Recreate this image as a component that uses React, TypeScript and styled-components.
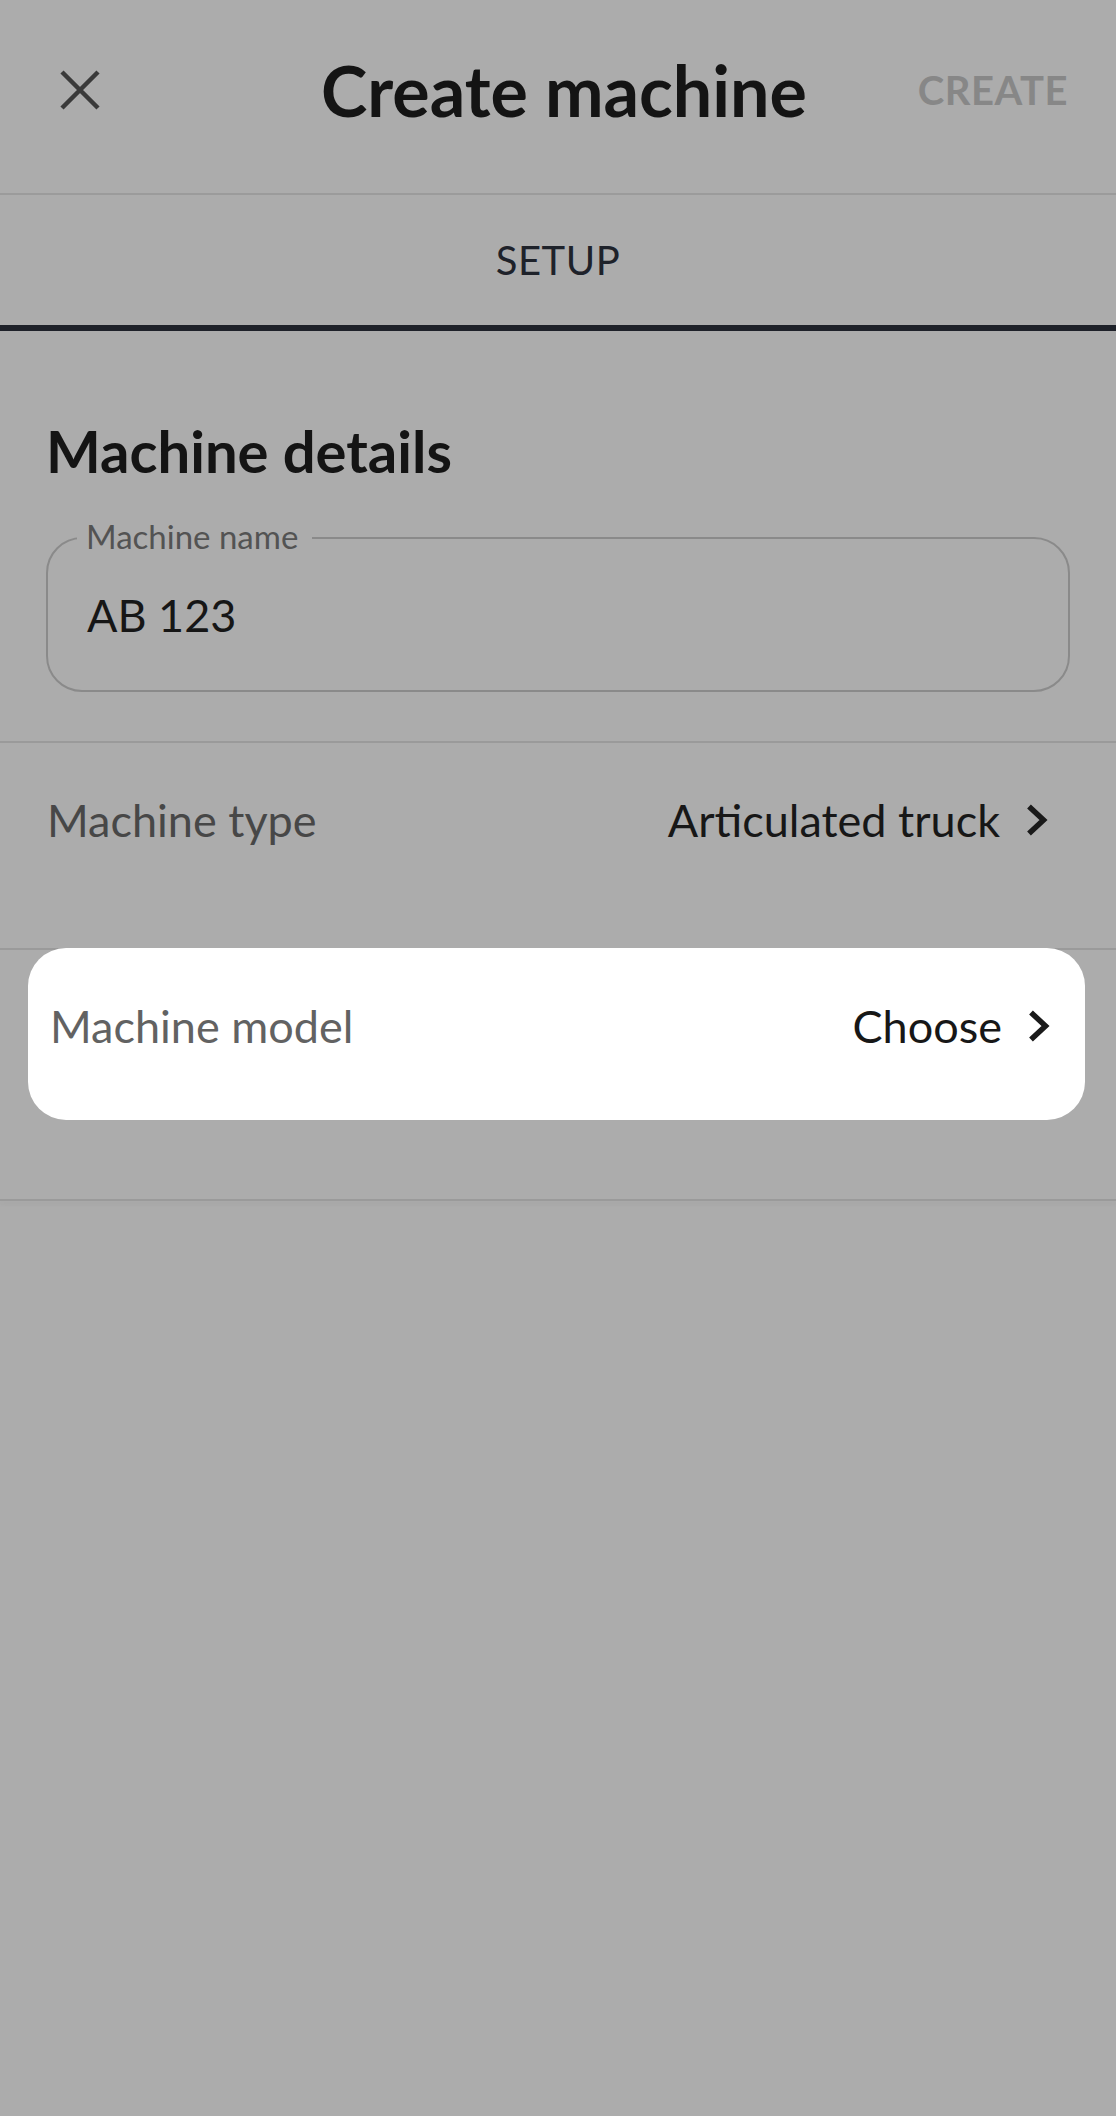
import React from "react";
import styled, { createGlobalStyle } from "styled-components";

const GlobalStyle = createGlobalStyle`
  html, body {
    margin: 0;
    padding: 0;
    background: #acacac;
  }
  * { box-sizing: border-box; }
  body {
    font-family: Lato, "Noto Sans", "Open Sans", sans-serif;
    -webkit-font-smoothing: antialiased;
  }
`;

const Page = styled.div`
  width: 1116px;
  min-height: 2116px;
  background: #acacac;
  display: flex;
  flex-direction: column;
`;

const Header = styled.header`
  height: 195px;
  padding: 0 48px 13px 60px;
  display: grid;
  grid-template-columns: 1fr auto 1fr;
  align-items: center;
  border-bottom: 2px solid #9b9b9b;
`;

const CloseButton = styled.button`
  justify-self: start;
  width: 40px;
  height: 40px;
  padding: 0;
  border: none;
  background: transparent;
  display: flex;
  align-items: center;
  justify-content: center;
`;

const Title = styled.h1`
  margin: 0;
  font-size: 70px;
  line-height: 84px;
  font-weight: 700;
  color: #141414;
`;

const CreateButton = styled.button`
  justify-self: end;
  padding: 0;
  border: none;
  background: transparent;
  font-family: inherit;
  font-size: 40px;
  font-weight: 700;
  color: #878787;
  letter-spacing: 0.5px;
`;

const TabBar = styled.nav`
  height: 136px;
  display: flex;
  flex-direction: column;
`;

const Tab = styled.div`
  flex: 1;
  display: flex;
  align-items: center;
  justify-content: center;
  font-size: 40px;
  font-weight: 400;
  color: #1e222a;
  letter-spacing: 0.5px;
  border-bottom: 6px solid #1e2129;
`;

const Section = styled.section`
  padding: 86px 46px 0 46px;
  display: flex;
  flex-direction: column;
`;

const SectionTitle = styled.h2`
  margin: 0;
  font-size: 58px;
  line-height: 68px;
  font-weight: 700;
  color: #141414;
`;

const Field = styled.div`
  position: relative;
  margin-top: 52px;
  height: 155px;
  border: 2.5px solid #8a8a8a;
  border-radius: 36px;
  display: flex;
  align-items: center;
  padding: 0 39px;
`;

const FieldLabel = styled.span`
  position: absolute;
  top: -23px;
  left: 29px;
  padding: 0 14px 0 9px;
  background: #acacac;
  font-size: 33px;
  line-height: 40px;
  color: #535353;
`;

const FieldValue = styled.span`
  font-size: 45px;
  line-height: 54px;
  color: #161616;
`;

const Divider = styled.div<{ $shadow?: boolean }>`
  height: 2px;
  background: #9a9a9a;
  box-shadow: ${(p) => (p.$shadow ? "0 3px 4px rgba(0,0,0,0.06)" : "none")};
`;

const Spacer = styled.div<{ $size: number }>`
  height: ${(p) => p.$size}px;
`;

const Row = styled.div<{ $height: number }>`
  height: ${(p) => p.$height}px;
  padding: 50px 68px 0 47px;
  display: flex;
  justify-content: space-between;
  align-items: flex-start;
`;

const HighlightRow = styled.div<{ $height: number }>`
  height: ${(p) => p.$height}px;
  padding: 0 31px 0 28px;
  margin-top: -2px;
`;

const Spotlight = styled.div`
  height: 172px;
  background: #ffffff;
  border-radius: 38px;
  padding: 51px 35px 0 22px;
  display: flex;
  justify-content: space-between;
  align-items: flex-start;
`;

const RowLabel = styled.span<{ $light?: boolean }>`
  font-size: 45px;
  line-height: 54px;
  color: ${(p) => (p.$light ? "#626262" : "#474747")};
`;

const RowValue = styled.span`
  display: flex;
  align-items: center;
  gap: 26px;
  font-size: 45px;
  line-height: 54px;
  color: #171717;
`;

const Chevron = () => (
  <svg width="22" height="32" viewBox="0 0 22 32" fill="none">
    <path d="M3 2.5 L17.5 16 L3 29.5" stroke="#1a1a1a" strokeWidth="5.5" strokeLinecap="butt" strokeLinejoin="miter" />
  </svg>
);

const CloseIcon = () => (
  <svg width="40" height="40" viewBox="0 0 40 40" fill="none">
    <path d="M2 2 L38 38 M38 2 L2 38" stroke="#3a3a3a" strokeWidth="4.5" />
  </svg>
);

export default function App() {
  return (
    <>
      <GlobalStyle />
      <Page>
        <Header>
          <CloseButton aria-label="Close">
            <CloseIcon />
          </CloseButton>
          <Title>Create machine</Title>
          <CreateButton>CREATE</CreateButton>
        </Header>
        <TabBar>
          <Tab>SETUP</Tab>
        </TabBar>
        <Section>
          <SectionTitle>Machine details</SectionTitle>
          <Field>
            <FieldLabel>Machine name</FieldLabel>
            <FieldValue>AB 123</FieldValue>
          </Field>
        </Section>
        <Spacer $size={49} />
        <Divider />
        <Row $height={205}>
          <RowLabel>Machine type</RowLabel>
          <RowValue>
            Articulated truck
            <Chevron />
          </RowValue>
        </Row>
        <Divider />
        <HighlightRow $height={251}>
          <Spotlight>
            <RowLabel $light>Machine model</RowLabel>
            <RowValue>
              Choose
              <Chevron />
            </RowValue>
          </Spotlight>
        </HighlightRow>
        <Divider $shadow />
      </Page>
    </>
  );
}
